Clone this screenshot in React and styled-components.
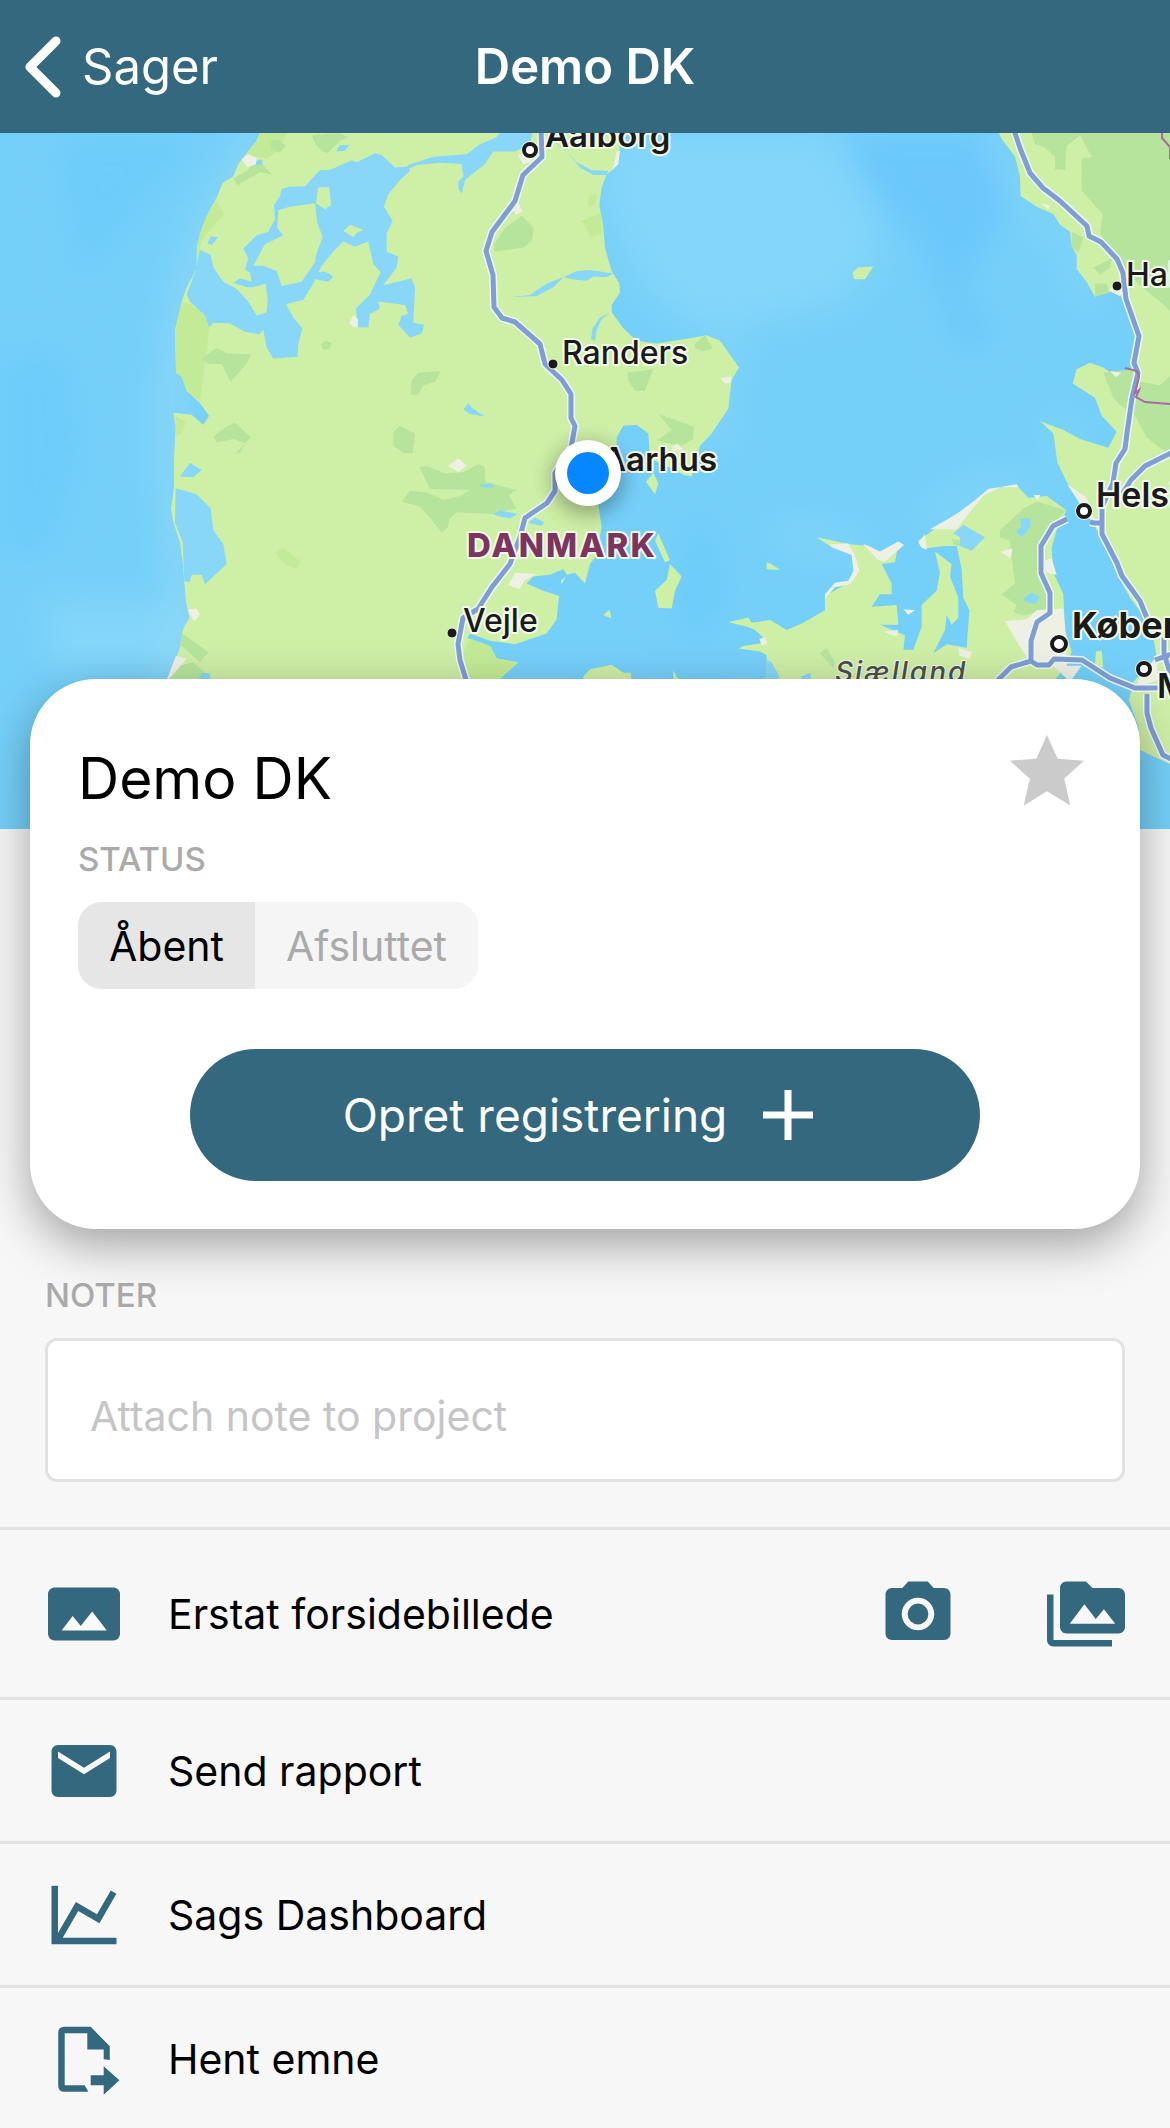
import React, { useState } from 'react'
import styled, { createGlobalStyle } from 'styled-components'
import { MdCameraAlt, MdEmail, MdPermMedia } from 'react-icons/md'

const petrol = '#34687e'

const rings = [
    { x: 530, y: 17, r: 6 },
    { x: 1084, y: 378, r: 6 },
    { x: 1059, y: 511, r: 7 },
    { x: 1144, y: 536, r: 6 },
]

const dots = [
    { x: 553, y: 231 },
    { x: 452, y: 500 },
    { x: 1117, y: 153 },
]

const cities = [
    { name: 'Aalborg', x: 545, y: 14, size: 33, weight: 600 },
    { name: 'Randers', x: 562, y: 231, size: 32, weight: 500 },
    { name: 'Aarhus', x: 602, y: 338, size: 33, weight: 600 },
    { name: 'Vejle', x: 463, y: 499, size: 32, weight: 500 },
    { name: 'Halmstad', x: 1126, y: 153, size: 32, weight: 500 },
    { name: 'Helsingborg', x: 1096, y: 374, size: 34, weight: 600 },
    { name: 'København', x: 1072, y: 505, size: 36, weight: 700 },
    { name: 'Malmö', x: 1157, y: 565, size: 34, weight: 600 },
]

const WestTile = () => (
    <g transform="translate(0 -3) scale(0.33333 0.35714)">
        <path
            className="land"
            d="M785 -5L770 30L740 65L715 95L700 130L668 148L650 190L620 240L600 290L590 330L590 385L578 410L560 440L545 480L540 510L525 560L528 680L545 690L560 730L600 765L627 800L610 825L575 797L520 792L527 830L522 920L522 1000L513 1060L520 1098L540 1155L548 1210L553 1270L558 1320L568 1365L548 1400L540 1450L528 1480L500 1545H1180V-5Z"
        />
        <path className="meadow" d="M545 480L575 490L615 520L628 552L610 690L600 760L560 730L545 690L528 680L525 560Z" />
        <path className="meadow" d="M785 -5H870L830 60L800 80L740 70L770 30ZM650 200L672 235L640 270L610 300L600 330L592 385V330L600 290L620 240ZM825 1185L850 1170L903 1210L890 1228L860 1220ZM527 800L557 820L545 850L528 860Z" />
        <path
            className="forest"
            d="M935 15L1015 8L1045 20L1020 30L980 68L950 45ZM812 30L835 25L857 45L840 62L812 55ZM700 135L745 112L750 95L790 98L815 124L780 118L712 155ZM605 640L650 610L680 625L755 628L735 660L692 705L665 655L625 655ZM963 600L975 590L995 595L990 612L970 615ZM640 858L680 830L705 820L752 860L735 878L700 865L650 875ZM735 878L705 908L722 902ZM548 1410L625 1462L600 1490L540 1440ZM540 1500L580 1490L640 1540L500 1545Z"
        />
        <path
            className="inlet"
            d="M600 335L632 350L640 385L670 425L710 445L745 480L770 520L800 510L803 475L797 430L760 440L740 440L700 428L720 415L755 425L750 400L735 390L745 360L730 332L770 295L805 285L825 250L822 210L840 185L845 165L870 158H915L960 112H990L1030 95L1055 85L1070 90L1125 65L1145 70L1185 105L1225 102L1230 115L1200 140L1165 180L1152 215L1178 255L1160 290V340L1195 355L1190 385L1150 435L1235 415L1245 440L1240 540L1272 545L1265 570L1230 582L1195 545L1205 520L1225 515L1215 490L1135 480L1140 500L1110 515L1105 552H1073L1068 500L1110 460L1142 398L1120 375L1105 312L1065 327L1030 312L1000 340L965 380L940 430L910 475L858 488L880 525L907 555L895 600L893 635L820 640L800 610L790 560L778 572L735 565L690 542L640 540L628 552L615 520L570 480L560 460L585 400Z"
        />
        <path
            className="inlet"
            d="M527 1003L590 1020L632 1060L640 1120L670 1160L680 1215L615 1272L605 1245H575L570 1265H553L548 1155L525 1100ZM540 970L570 932L605 952L580 972ZM1008 60L1020 42L1048 42L1035 58ZM622 318L632 298L655 300L635 322ZM762 88L785 82L788 98L768 98ZM945 400L975 396L1000 410L985 425L945 418ZM595 1535L608 1520L632 1522L625 1540Z"
        />
        <path
            className="land"
            d="M835 225L870 215L945 205L952 260L968 300L948 350L945 370L905 425L845 437L830 395L790 380H760L795 320L850 295L832 275ZM955 160L988 160L993 210L975 222L948 205ZM1030 283L1050 265L1090 280L1070 288L1060 300Z"
        />
        <path className="sand" d="M725 82L745 68L770 78L768 95L742 105ZM1048 540L1060 518L1074 530L1073 552L1060 552ZM563 1342L590 1340L600 1358L582 1377ZM528 1472L560 1480L515 1530L500 1540Z" />
    </g>
)

const CentreTile = () => (
    <g transform="translate(390 -3) scale(0.33333 0.35714)">
        <path
            className="land"
            d="M692 -5L688 60L670 110L650 125L635 160L628 210L640 270L645 330L665 395L688 430L690 455L665 490V510L700 555L740 590L800 598L900 583L950 575L990 590L1047 665L1025 700L1015 780L965 850L930 885L905 970L880 965L850 950L780 920L775 850L740 825L700 828L680 860L680 890L650 920L640 1000L625 1050L635 1110L620 1190L600 1215L585 1270L555 1240L530 1245L520 1230L480 1245L430 1250L410 1270L460 1290L507 1305L500 1370L470 1410L375 1440L300 1430L240 1410L232 1422L300 1445L320 1480L385 1490L350 1520L320 1545H-10V-5Z"
        />
        <path
            className="land"
            d="M1015 1378L1075 1365L1085 1380L1140 1372L1190 1400L1240 1385V1545H1170L1160 1520L1150 1480L1110 1460L1045 1452L1060 1445L1110 1438L1130 1430L1095 1400L1070 1390Z"
        />
        <path
            className="forest"
            d="M312 320L345 275L395 240L432 275L425 310L400 330L312 340ZM65 700L85 680L152 675L135 705L100 715L85 742L62 740ZM5 850L30 828L75 850L68 905L40 905L5 880ZM88 945L110 940L165 962L220 958L265 935L285 945L285 985L380 1008L355 1022L380 1060L300 1075L200 1070L178 1090L175 1110L155 1128L120 1085L90 1055L35 1040L60 1010L110 1015L160 1035L210 1025L240 1008L120 1005ZM712 680L790 670L765 730L735 730L715 700ZM805 795L912 830L910 865L875 885L800 870L845 840ZM915 600L945 575L968 612L940 620L915 612Z"
        />
        <path className="meadow" d="M240 1425L300 1445L320 1480L385 1490L350 1520L320 1545H225L210 1480ZM595 185L620 180L615 210L595 215ZM572 255L632 232L636 290L600 300L590 275Z" />
        <path
            className="inlet"
            d="M-10 125L45 110L55 98L130 75L230 68L270 40L320 20L340 -5H430L420 40L375 60L310 60L285 95L225 140L215 178L205 165L205 145L220 130L215 95L150 92L80 98L50 112L10 150L-10 165ZM490 30L520 50L560 90L605 113L655 115L650 126H610L570 105L530 60ZM355 468L420 462L470 430L520 412L560 395L600 392L670 402L650 412L610 410L590 422L545 418L520 412L490 440L440 465ZM660 510L635 530L620 560L615 590L603 585L608 555L630 525ZM220 782L235 765L245 778L285 802L240 795ZM308 1075L330 1065L382 1075L360 1088L330 1082ZM415 1100L435 1085L462 1098L455 1108ZM265 995L305 990L312 1000L285 1002Z"
        />
        <path
            className="land"
            d="M840 1215L875 1250L855 1290L845 1340L805 1338L795 1290L830 1260ZM805 1130L840 1205L825 1210L795 1150ZM790 960L805 990L795 1020L768 985ZM658 1343L665 1368L640 1358ZM1135 1210L1172 1232L1140 1218ZM580 1530L600 1510L665 1497L700 1520L722 1520L725 1545H580ZM850 1513L868 1545H850ZM512 1262L528 1250L515 1272Z"
        />
        <path className="sand" d="M385 70L410 60L430 85L400 97ZM680 60L690 58L685 95L668 112ZM365 215L385 205L397 228L378 238ZM175 940L205 920L230 940L205 958ZM992 695L1025 690L1022 708L1005 710ZM355 1275L375 1240L440 1243L405 1260L390 1285ZM845 888L862 878L880 895L850 900ZM1108 1425L1125 1420L1132 1440L1115 1442Z" />
    </g>
)

const EastTile = () => (
    <g transform="translate(770 -3) scale(0.33333 0.35714)">
        <path
            className="land"
            d="M680 -5L695 25L735 75L750 130L752 185L800 215L850 235L870 265L900 285L905 325L920 350V390L950 425L975 467L1040 440L1060 480L1090 540L1100 600L1090 665L1040 690L1000 665L960 652L920 670L908 710L975 750L995 800L1040 845L1015 890L930 865L880 840L810 815L850 850L862 930L890 985L960 1060L975 1110L1010 1170L1035 1230L1080 1310L1125 1365L1150 1420L1160 1475L1090 1545L1077 1596L1105 1670L1110 1736L1210 1780V-5Z"
        />
        <path
            className="forest"
            d="M780 -5L795 40L825 50L855 75V110L885 112L890 45L930 15L965 75L935 80V170L998 235L990 290L1040 355L1070 400L1130 450L1170 480L1210 515V-5ZM1000 680L1090 670L1110 705L1170 715L1210 680V920L1130 860L1095 800L1050 770L1030 750ZM905 285L940 300L925 345L905 325ZM970 385L1025 360L1020 385L990 405ZM975 430L1010 430L1020 455L975 467Z"
        />
        <path
            className="land"
            d="M-10 1375L25 1385L40 1405L100 1380L165 1345V1305L240 1265L265 1235L255 1190L180 1165L140 1140L240 1160L300 1165L340 1195L385 1160L375 1210L335 1215L365 1270L365 1300L330 1300L305 1335L380 1330L385 1385H330L405 1415L400 1455H430L455 1390V1330L500 1290L510 1240L495 1180L545 1215L540 1250L565 1310V1365L545 1385L530 1358L525 1400L490 1465L530 1440L590 1450L598 1345L580 1310L575 1230L560 1165L520 1165L465 1172L445 1150L520 1100L600 1050L660 1005L740 995L775 1030L830 1025L890 1065L860 1120L845 1170L850 1240L880 1300L885 1400L905 1460L890 1500L850 1545H-10Z"
        />
        <path className="land" d="M-10 1210L30 1232L-10 1230ZM248 398L265 385L310 382L285 418H252ZM978 1460L995 1458L1000 1505L975 1500Z" />
        <path
            className="forest"
            d="M690 1120L720 1095L760 1060L800 1040L890 1065L850 1100L810 1150L805 1230L835 1270L840 1340L760 1360L730 1350L740 1330L695 1300L735 1270L725 1200L720 1150L690 1140ZM150 1465L170 1450L195 1490L190 1508ZM545 1145L575 1150L570 1165L550 1160Z"
        />
        <path className="inlet" d="M550 1130L580 1105L645 1140L605 1178L570 1165L570 1140ZM750 1090L780 1085L782 1110L755 1140L738 1125L755 1110ZM760 1312L785 1295L810 1308L795 1328L765 1320ZM-10 1485L5 1490L28 1530L20 1545H-10ZM95 1530L120 1520L125 1545H90Z" />
        <path
            className="sand"
            d="M180 1160L235 1158L255 1190L268 1235L240 1272L195 1280L165 1312V1300L195 1268L235 1262L250 1235L245 1190L185 1168ZM278 1158L330 1180L385 1152L402 1162L345 1208L325 1205ZM445 1155L465 1132L470 1175L455 1170ZM480 1118L560 1075L610 1040L655 1005L740 992L745 1000L690 1000L640 1025L595 1075L560 1118ZM705 1375L770 1370L800 1345L880 1340L888 1420L890 1500L850 1500L780 1490L745 1440ZM690 1180L728 1172L722 1200ZM338 1405L385 1400L380 1418ZM565 1450L605 1462L600 1482L568 1472ZM825 1205L845 1200L860 1245L825 1238ZM790 1022L810 1022L805 1038ZM812 205L840 212L835 222ZM1015 450L1040 430L1070 450L1050 465ZM1020 675L1055 680L1038 692ZM400 1342L435 1345L415 1357ZM890 990L950 1030L985 1120L960 1090ZM1110 1520L1160 1480L1165 1540L1100 1560ZM850 1500L935 1500L900 1545Z"
        />
    </g>
)

const roads = [
    // E45 down through Jylland
    'M541 -3L542 24L523 42L515 68L492 99L486 118L493 142L494 174L502 185L515 189L540 211L545 231L562 247L571 261V285L575 293L571 315L555 340V358L547 370L525 385L520 404L510 431L492 454L478 476L463 485L458 511L460 527L467 550',
    // E6 on the Swedish side
    'M1014 -3L1020 15L1030 40L1043 55L1060 68L1087 93L1089 103L1101 109L1117 126L1123 140L1126 166L1139 203L1134 230L1138 240L1132 265L1127 300L1125 316L1116 330L1113 350L1102 374V401L1117 430L1122 443L1140 468L1147 485',
    'M1175 318L1145 333L1131 347L1122 361',
    'M1090 389L1094 390H1102',
    'M1067 386L1053 393L1041 413V440L1050 460V480L1037 489L1031 508V528L1037 532H1049L1054 526L1082 527L1110 545L1135 555H1160L1170 545',
    'M995 550L1011 534L1031 528',
    'M1164 505V520L1170 540M1155 527L1175 520M1147 561V580L1151 595L1163 622L1175 628',
]

const MapDrawing = () => (
    <MapSvg viewBox="0 0 1170 696" preserveAspectRatio="xMidYMin slice" role="img" aria-label="Kort over Danmark">
        <defs>
            <filter id="soft" x="-50%" y="-50%" width="200%" height="200%">
                <feGaussianBlur stdDeviation="16" />
            </filter>
            <filter id="pinShadow" x="-100%" y="-100%" width="300%" height="300%">
                <feGaussianBlur stdDeviation="10" />
            </filter>
        </defs>
        <rect width="1170" height="696" fill="#75d0f9" />
        <g filter="url(#soft)">
            <path fill="#6eccfb" d="M60 0H200L150 60L80 150L70 90ZM0 220H70L80 330L50 420H0ZM690 380L720 400L730 470L700 520L670 480Z" />
            <path fill="#6cc8fb" d="M850 0H990L1010 70L960 160L1000 200L960 220L920 110L860 40Z" />
            <path fill="#84d6fa" d="M610 0H830L870 70L880 130L840 170L760 190L700 200L640 150L600 60ZM40 470H190V540H60Z" />
            <path fill="none" stroke="#9cdcf5" strokeWidth="14" d="M262 0L235 45L205 95L185 160L172 240L172 350L178 440L185 500L165 550" />
            <path fill="none" stroke="#8ad8f8" strokeWidth="12" d="M990 0L1020 60L1070 110L1090 165M1060 290L1075 350M930 390L980 355L1040 360M780 400L860 415M735 200L720 250L715 310" />
        </g>
        <CentreTile />
        <WestTile />
        <EastTile />
        {roads.map((d) => (
            <path key={d} d={d} fill="none" stroke="#eef5fb" strokeWidth="8" strokeLinejoin="round" />
        ))}
        {roads.map((d) => (
            <path key={d} d={d} fill="none" stroke="#7e9fd0" strokeWidth="5" strokeLinejoin="round" />
        ))}
        <path d="M1125 235L1137 238L1139 244L1135 260L1139 257L1136 264L1145 269L1170 271M1162 -2V5L1170 14V26" fill="none" stroke="#a76b9f" strokeWidth="2" />
        {dots.map((dot) => (
            <circle key={dot.x} cx={dot.x} cy={dot.y} r="5" fill="#1a1a1a" stroke="#f4f8ee" strokeWidth="1" />
        ))}
        {rings.map((ring) => (
            <g key={ring.x}>
                <circle cx={ring.x} cy={ring.y} r={ring.r + 3} fill="#f4f8ee" />
                <circle cx={ring.x} cy={ring.y} r={ring.r} fill="#fff" stroke="#1a1a1a" strokeWidth="4" />
            </g>
        ))}
        {cities.map((city) => (
            <CityName key={city.name} x={city.x} y={city.y} $size={city.size} $weight={city.weight}>
                {city.name}
            </CityName>
        ))}
        <CountryName x="467" y="424">DANMARK</CountryName>
        <RegionName x="835" y="549">Sjælland</RegionName>
        <circle cx="588" cy="346" r="36" fill="#000" opacity="0.3" filter="url(#pinShadow)" />
        <circle cx="588" cy="340" r="33" fill="#fff" />
        <circle cx="588" cy="340" r="21" fill="#0687ff" />
    </MapSvg>
)

const BackIcon = () => (
    <svg width="38" height="64" viewBox="0 0 38 64" fill="none" stroke="#fff" strokeWidth="9" strokeLinecap="round" strokeLinejoin="round" aria-hidden="true">
        <path d="M32 6L6 32L32 58" />
    </svg>
)

const StarIcon = () => (
    <svg width="90" height="88" viewBox="0 0 90 88" fill="#cbcbcb" aria-hidden="true">
        <path d="M45 8L55.7 31.7L82 33.7L62.2 51.7L68.3 78.5L45 64.3L21.7 78.5L27.8 51.7L8 33.7L34.3 31.7Z" />
    </svg>
)

const PlusIcon = () => (
    <svg width="50" height="50" viewBox="0 0 50 50" fill="#fff" aria-hidden="true">
        <path d="M21.5 0H28.5V21.5H50V28.5H28.5V50H21.5V28.5H0V21.5H21.5Z" />
    </svg>
)

const ImageIcon = () => (
    <svg width="78" height="78" viewBox="0 0 78 78" fill={petrol} aria-hidden="true">
        <rect x="3" y="12.5" width="72" height="53" rx="6.5" />
        <path fill="#f9fafb" d="M16.6 55.5L27.7 41L35.7 51L47.2 36.5L61.8 55.5Z" />
    </svg>
)

const ChartIcon = () => (
    <svg width="78" height="78" viewBox="0 0 24 24" fill={petrol} aria-hidden="true">
        <path d="M16 11.78L20.24 4.45L21.97 5.45L16.74 14.5L10.23 10.75L5.46 19H22V21H2V3H4V17.54L9.5 8L16 11.78Z" />
    </svg>
)

const ExportIcon = () => (
    <svg width="78" height="78" viewBox="0 0 78 78" fill={petrol} aria-hidden="true">
        <path d="M19.5 6.8H45.7L64.8 26.2V40L58.7 39.3V29.5H42.3V13.2H19.7V65.2H39.6L43.4 71.8H19.5Q13.2 71.8 13.2 65.5V13.1Q13.2 6.8 19.5 6.8Z" />
        <path d="M45.7 55.2H58.7V46.2L74.4 60.2L58.7 74.8V65.2H45.7Z" />
    </svg>
)

const App = () => {
    const [status, setStatus] = useState('open')
    const [favorite, setFavorite] = useState(false)
    const [note, setNote] = useState('')

    return (
        <Page>
            <GlobalStyle />
            <Header>
                <BackLink href="#sager">
                    <BackIcon />
                    Sager
                </BackLink>
                <HeaderTitle>Demo DK</HeaderTitle>
            </Header>
            <MapArea>
                <MapDrawing />
            </MapArea>
            <Card>
                <CardTop>
                    <ProjectName>Demo DK</ProjectName>
                    <IconButton
                        type="button"
                        aria-label="Favorit"
                        aria-pressed={favorite}
                        onClick={() => setFavorite(!favorite)}>
                        <StarIcon />
                    </IconButton>
                </CardTop>
                <Caption id="status">STATUS</Caption>
                <Segments role="group" aria-labelledby="status">
                    <Segment
                        type="button"
                        aria-pressed={status === 'open'}
                        $active={status === 'open'}
                        onClick={() => setStatus('open')}>
                        Åbent
                    </Segment>
                    <Segment
                        type="button"
                        aria-pressed={status === 'closed'}
                        $active={status === 'closed'}
                        onClick={() => setStatus('closed')}>
                        Afsluttet
                    </Segment>
                </Segments>
                <CreateButton type="button">
                    Opret registrering
                    <PlusIcon />
                </CreateButton>
            </Card>
            <Notes>
                <Caption as="label" htmlFor="note">NOTER</Caption>
                <NoteInput
                    id="note"
                    type="text"
                    placeholder="Attach note to project"
                    value={note}
                    onChange={(e) => setNote(e.target.value)}
                />
            </Notes>
            <Actions>
                <Row $tall>
                    <RowButton type="button">
                        <ImageIcon />
                        Erstat forsidebillede
                    </RowButton>
                    <RowTools>
                        <IconButton type="button" aria-label="Tag billede">
                            <MdCameraAlt size={78} color={petrol} />
                        </IconButton>
                        <IconButton type="button" aria-label="Vælg billede">
                            <MdPermMedia size={78} color={petrol} />
                        </IconButton>
                    </RowTools>
                </Row>
                <Row>
                    <RowButton type="button">
                        <MdEmail size={78} color={petrol} />
                        Send rapport
                    </RowButton>
                </Row>
                <Row>
                    <RowButton type="button">
                        <ChartIcon />
                        Sags Dashboard
                    </RowButton>
                </Row>
                <Row>
                    <RowButton type="button">
                        <ExportIcon />
                        Hent emne
                    </RowButton>
                </Row>
            </Actions>
        </Page>
    )
}

export default App

const GlobalStyle = createGlobalStyle`
* {
box-sizing: border-box;
}
body {
margin: 0;
background: #f7f7f7;
color: #000;
font-family: Inter, "Liberation Sans", sans-serif;
}
button, input {
font-family: inherit;
}
`

const Page = styled.div`
min-height: 100vh;
background: #f7f7f7;
`

const Header = styled.header`
display: grid;
grid-template-columns: 1fr auto 1fr;
align-items: center;
height: 133px;
padding: 0 24px;
background: ${petrol};
color: #fff;
`

const BackLink = styled.a`
display: flex;
align-items: center;
gap: 20px;
color: #fff;
font-size: 49px;
line-height: 64px;
text-decoration: none;
`

const HeaderTitle = styled.h1`
margin: 0;
font-size: 49px;
font-weight: 600;
line-height: 64px;
`

const MapArea = styled.div`
height: 696px;
overflow: hidden;
`

const MapSvg = styled.svg`
display: block;
width: 100%;
height: 100%;

.land {
fill: #ceefa6;
}
.meadow {
fill: #c3eb97;
}
.forest {
fill: #b7e49d;
}
.inlet {
fill: #88d7f8;
}
.sand {
fill: #eff0e4;
}
`

const MapText = styled.text`
paint-order: stroke;
stroke: #f3f9ec;
stroke-width: 4px;
stroke-linejoin: round;
`

const CityName = styled(MapText)`
fill: #1a1a1a;
font-size: ${({ $size }) => $size}px;
font-weight: ${({ $weight }) => $weight};
`

const CountryName = styled(MapText)`
fill: #7c3560;
font-size: 33px;
font-weight: 800;
letter-spacing: 2px;
`

const RegionName = styled(MapText)`
fill: #4c4f4a;
stroke-width: 2px;
font-size: 28px;
font-style: italic;
font-weight: 500;
letter-spacing: 2px;
`

const Card = styled.section`
position: relative;
margin: -150px 30px 0;
padding: 48px;
border-radius: 66px;
background: #fff;
box-shadow: 0 16px 48px rgba(0, 0, 0, 0.35);
`

const CardTop = styled.div`
display: flex;
align-items: flex-end;
justify-content: space-between;
`

const ProjectName = styled.h2`
margin: 0;
font-size: 57px;
font-weight: 400;
line-height: 72px;
`

const IconButton = styled.button`
display: flex;
padding: 0;
border: 0;
background: none;
cursor: pointer;
`

const Caption = styled.div`
display: block;
margin: 24px 0 23px;
color: #aaa;
font-size: 33px;
font-weight: 500;
line-height: 40px;
`

const Segments = styled.div`
display: flex;
width: fit-content;
border-radius: 24px;
overflow: hidden;
background: #f5f5f5;
`

const Segment = styled.button`
height: 87px;
padding: 0 31px;
border: 0;
background: ${({ $active }) => ($active ? '#e6e6e6' : '#f5f5f5')};
color: ${({ $active }) => ($active ? '#000' : '#aaa')};
font-size: 41px;
cursor: pointer;
`

const CreateButton = styled.button`
display: flex;
align-items: center;
justify-content: center;
gap: 36px;
width: 78%;
height: 132px;
margin: 60px auto 0;
padding: 0 14px 0 0;
border: 0;
border-radius: 66px;
background: ${petrol};
color: #fff;
font-size: 46px;
cursor: pointer;
`

const Notes = styled.section`
padding: 22px 45px 45px;
`

const NoteInput = styled.input`
display: block;
width: 100%;
height: 144px;
padding: 12px 42px 0;
border: 3px solid #e2e2e2;
border-radius: 12px;
background: #fff;
color: #000;
font-size: 41px;

&::placeholder {
color: #c5c5c7;
opacity: 1;
}
`

const Actions = styled.ul`
margin: 0;
padding: 0;
list-style: none;
`

const Row = styled.li`
display: flex;
align-items: center;
justify-content: space-between;
height: ${({ $tall }) => ($tall ? 170 : 144)}px;
padding: 0 45px;
border-top: 3px solid #e2e2e2;
`

const RowButton = styled.button`
display: flex;
flex: 1;
align-items: center;
gap: 45px;
padding: 0;
border: 0;
background: none;
color: #000;
font-size: 41px;
text-align: left;
cursor: pointer;
`

const RowTools = styled.div`
display: flex;
gap: 90px;
`
